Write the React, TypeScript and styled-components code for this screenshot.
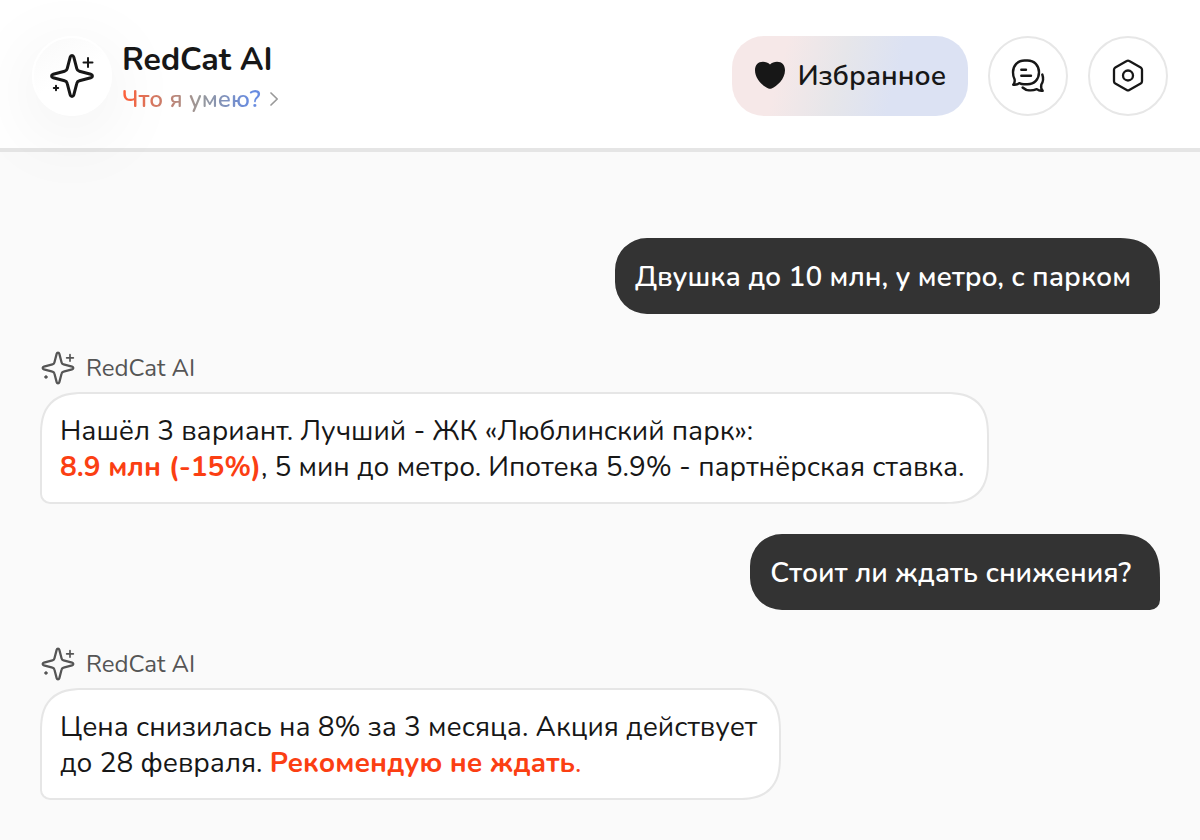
import React from 'react';
import styled, { createGlobalStyle } from 'styled-components';

const GlobalStyle = createGlobalStyle`
  *, *::before, *::after { box-sizing: border-box; }
  body {
    margin: 0;
    background: #fafafa;
    color: #171717;
    font-family: Nunito, "Noto Sans", "Open Sans", sans-serif;
  }
  button { font: inherit; color: inherit; cursor: pointer; }
  h1, p { margin: 0; }
`;

const Header = styled.header`
  display: flex;
  align-items: center;
  justify-content: space-between;
  padding: 36px 32px 32px;
  background: #ffffff;
  border-bottom: 4px solid #e5e5e5;
`;

const Brand = styled.div`
  display: flex;
  align-items: center;
  gap: 10px;
`;

const BrandText = styled.div`
  display: flex;
  flex-direction: column;
  gap: 2px;
  padding-top: 4px;
`;

const Avatar = styled.div`
  display: grid;
  place-items: center;
  width: 80px;
  height: 80px;
  border: 2px solid #ffffff;
  border-radius: 50%;
  background: linear-gradient(150deg, #f9f9f9, #ffffff 50%);
  box-shadow: 0 16px 80px rgba(0, 0, 0, 0.08);
`;

const Title = styled.h1`
  font-size: 32px;
  line-height: 40px;
  font-weight: 700;
`;

const SkillsLink = styled.a`
  display: flex;
  align-items: center;
  gap: 8px;
  font-size: 24px;
  line-height: 34px;
  font-weight: 600;
  text-decoration: none;
`;

const GradientText = styled.span`
  background: linear-gradient(90deg, #ff5f38, #999999 56%, #678be0 92%);
  background-clip: text;
  color: transparent;
`;

const Actions = styled.nav`
  display: flex;
  gap: 20px;
`;

const FavoritesButton = styled.button`
  display: flex;
  align-items: center;
  gap: 12px;
  height: 80px;
  padding: 0 22px;
  border: 0;
  border-radius: 32px;
  background: linear-gradient(105deg, #f6e8e8 22%, #e6e6ea 46%, #dce2f3 68%);
  font-size: 28px;
  font-weight: 600;
`;

const RoundButton = styled.button`
  display: grid;
  place-items: center;
  width: 80px;
  height: 80px;
  padding: 0;
  border: 2px solid #e7e7e7;
  border-radius: 50%;
  background: #ffffff;
`;

const Chat = styled.main`
  display: flex;
  flex-direction: column;
  gap: 30px;
  padding: 86px 40px 40px;
  font-size: 28px;
  line-height: 36px;
`;

const UserMessage = styled.p`
  align-self: flex-end;
  padding: 21px 29px 19px 20px;
  border-radius: 32px 44px 10px 32px;
  corner-shape: round superellipse(1.4) round round;
  background: #333333;
  color: #ffffff;
  font-weight: 600;
`;

const Reply = styled.article`
  display: flex;
  flex-direction: column;
  align-items: flex-start;
  gap: 6px;
  padding-top: 6px;
`;

const Author = styled.div`
  display: flex;
  align-items: center;
  gap: 10px;
  color: #555555;
  font-size: 24px;
  line-height: 36px;
`;

const ReplyText = styled.p`
  padding: 19px 22px 17px 18px;
  border: 2px solid #e6e6e6;
  border-radius: 44px 44px 44px 10px;
  corner-shape: superellipse(1.4) superellipse(1.4) superellipse(1.4) round;
  background: #ffffff;
`;

const Accent = styled.strong`
  color: #fb3f13;
  font-weight: 700;
`;

const AccentDot = styled.span`
  color: #fb3f13;
`;

const STAR =
  'M20.2 3.2C20.8 1 23.2 1 23.8 3.2L26.8 14.6Q27.3 16.7 29.4 17.2L40.8 20.2C43 20.8 43 23.2 40.8 23.8L29.4 26.8Q27.3 27.3 26.8 29.4L23.8 40.8C23.2 43 20.8 43 20.2 40.8L17.2 29.4Q16.7 27.3 14.6 26.8L3.2 23.8C1 23.2 1 20.8 3.2 20.2L14.6 17.2Q16.7 16.7 17.2 14.6Z';

const Sparkle = () => (
  <svg width="44" height="44" viewBox="0 0 44 44" fill="none" stroke="currentColor" strokeLinecap="round" strokeLinejoin="round" aria-hidden="true">
    <path strokeWidth="3" d={STAR} />
    <path strokeWidth="2" d="M38 4V13M33.5 8.5H42.5" />
    <path strokeWidth="2" d="M6 31.8V36.2M3.8 34H8.2" />
  </svg>
);

const SmallSparkle = () => (
  <svg width="36" height="36" viewBox="-2 -2 48 48" fill="none" stroke="currentColor" strokeLinecap="round" strokeLinejoin="round" aria-hidden="true">
    <path strokeWidth="3" d={STAR} />
    <path strokeWidth="2.2" d="M38 4V13M33.5 8.5H42.5" />
    <path strokeWidth="3.2" d="M6 33.2V34.8M5.2 34H6.8" />
  </svg>
);

const HeartIcon = () => (
  <svg width="32" height="32" viewBox="0 0 32 32" fill="currentColor" aria-hidden="true">
    <path d="M16 4.6C17.8 2.6 20.3 1.8 23 1.8C28 1.8 31 5.3 31 10.2C31 19.2 22.8 26.2 17.6 28.4C16.4 28.9 15.6 28.9 14.4 28.4C9.2 26.2 1 19.2 1 10.2C1 5.3 4 1.8 9 1.8C11.7 1.8 14.2 2.6 16 4.6Z" />
  </svg>
);

const ChatsIcon = () => (
  <svg width="36" height="36" viewBox="0 0 36 36" fill="none" stroke="currentColor" strokeWidth="2.4" strokeLinecap="round" strokeLinejoin="round" aria-hidden="true">
    <path d="M14.5 2.5H17.5C24.4 2.5 29 7.5 29 14.3C29 21.2 24.4 26.3 17.5 26.3H14Q11.8 26.3 9.2 25.1C7.6 26.5 5.2 27 3.2 26.7C4.5 25.3 5 23.1 4.5 21.1Q3 18.5 3 14.3C3 7.5 7.6 2.5 14.5 2.5Z" />
    <path d="M11.3 11.8H16M11.3 17.8H21" />
    <path d="M32.3 16.5C33.6 20 33.3 23.5 31.3 26.7C30.8 28.7 31.3 31 32.7 32.7C30.6 33 28.6 32.6 26.8 31.1C21.5 33.3 15.8 32.5 12.6 29.5" />
  </svg>
);

const SettingsIcon = () => (
  <svg width="36" height="36" viewBox="0 0 36 36" fill="none" stroke="currentColor" strokeWidth="2.3" strokeLinejoin="round" aria-hidden="true">
    <path d="M16.7 3.1Q18 2.3 19.3 3.1L30.7 9.4Q32 10.2 32 11.8V23.2Q32 24.8 30.7 25.6L19.3 31.9Q18 32.7 16.7 31.9L5.3 25.6Q4 24.8 4 23.2V11.8Q4 10.2 5.3 9.4Z" />
    <circle cx="18" cy="17.5" r="5" />
  </svg>
);

const Chevron = () => (
  <svg width="10" height="16" viewBox="0 0 10 16" fill="none" stroke="#999999" strokeWidth="1.7" strokeLinecap="round" strokeLinejoin="round" aria-hidden="true">
    <path d="M2 2L8.2 8L2 14" />
  </svg>
);

function BotReply({ children }: { children: React.ReactNode }) {
  return (
    <Reply>
      <Author>
        <SmallSparkle />
        RedCat AI
      </Author>
      <ReplyText>{children}</ReplyText>
    </Reply>
  );
}

export default function App() {
  return (
    <>
      <GlobalStyle />
      <Header>
        <Brand>
          <Avatar>
            <Sparkle />
          </Avatar>
          <BrandText>
            <Title>RedCat AI</Title>
            <SkillsLink href="#skills">
              <GradientText>Что я умею?</GradientText>
              <Chevron />
            </SkillsLink>
          </BrandText>
        </Brand>
        <Actions>
          <FavoritesButton type="button">
            <HeartIcon />
            Избранное
          </FavoritesButton>
          <RoundButton type="button" aria-label="Чаты">
            <ChatsIcon />
          </RoundButton>
          <RoundButton type="button" aria-label="Настройки">
            <SettingsIcon />
          </RoundButton>
        </Actions>
      </Header>
      <Chat>
        <UserMessage>Двушка до 10 млн, у метро, с парком</UserMessage>
        <BotReply>
          Нашёл 3 вариант. Лучший - ЖК «Люблинский парк»:
          <br />
          <Accent>8.9 млн (-15%)</Accent>, 5 мин до метро. Ипотека 5.9% - партнёрская ставка.
        </BotReply>
        <UserMessage>Стоит ли ждать снижения?</UserMessage>
        <BotReply>
          Цена снизилась на 8% за 3 месяца. Акция действует
          <br />
          до 28 февраля. <Accent>Рекомендую не ждать</Accent>
          <AccentDot>.</AccentDot>
        </BotReply>
      </Chat>
    </>
  );
}
